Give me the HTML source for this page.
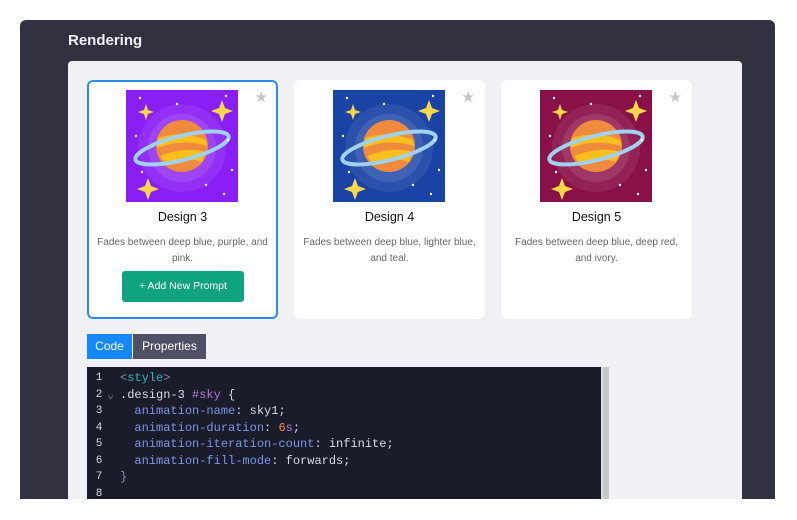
<!DOCTYPE html>
<html><head><meta charset="utf-8"><style>
*{margin:0;padding:0;box-sizing:border-box}
body{width:797px;height:520px;background:#fff;font-family:"Liberation Sans",sans-serif;position:relative;overflow:hidden}
.dark{position:absolute;left:20px;top:20px;width:755px;height:479px;background:#32313f;border-radius:6px 6px 0 0}
.title{position:absolute;left:68px;top:32px;color:#f0f0f5;font-weight:bold;font-size:15px}
.inner{position:absolute;left:68px;top:61px;width:674px;height:438px;background:#f0f0f5;border-radius:4px 4px 0 0}
.card{position:absolute;top:80px;width:191px;height:239px;background:#fff;border-radius:6px}
.card.sel{border:2px solid #2b8cf6}
.card svg.img{position:absolute;left:39px;top:10px}
.card.sel svg.img{left:37px;top:8px}
.star{position:absolute;right:10px;top:8px;color:#c4c4c8;font-size:15px}
.card.sel .star{right:8px;top:6px}
.name{position:absolute;left:0;right:0;top:130px;text-align:center;font-size:12.5px;color:#111}
.desc{position:absolute;left:6px;right:6px;top:155px;text-align:center;font-size:10px;line-height:16px;color:#666}
.card.sel .name{top:128px}.card.sel .desc{top:153px;left:4px;right:4px}
.btn{position:absolute;left:33px;top:189px;width:122px;height:31px;background:#10a37f;border-radius:3px;color:#fff;font-size:10.5px;text-align:center;line-height:31px}
.tab{position:absolute;top:334px;height:25px;line-height:25px;font-size:12px;color:#fff;text-align:center}
.code{position:absolute;left:87px;top:367px;width:514px;height:132px;background:#1b1c29;font-family:"Liberation Mono",monospace;font-size:12px}
.ln{position:absolute;left:0;width:24px;text-align:center;color:#6b6d80;font-size:11px}
.l{position:absolute;height:16.6px;line-height:16.6px;white-space:pre;color:#d8d9e6}
.sb{position:absolute;left:601px;top:367px;width:8px;height:132px;background:#c9c9cc;border-left:2px solid #ddd}
</style></head><body>
<div class="dark"></div>
<div class="title">Rendering</div>
<div class="inner"></div>
<svg width="0" height="0" style="position:absolute"><defs>
<g id="pl">
<circle cx="56" cy="58" r="44" fill="#fff" opacity=".08"/>
<circle cx="56" cy="58" r="34" fill="#fff" opacity=".1"/>
<circle cx="56" cy="56" r="26" fill="#f08a3c"/>
<path d="M32 48 Q56 40 80 50 L81 56 Q56 48 31 58Z M34 66 Q60 56 80 62 L76 72 Q58 66 40 74Z" fill="#fdbf1a"/>
<ellipse cx="56" cy="58" rx="48" ry="12" transform="rotate(-14 56 58)" fill="none" stroke="#9ed2ee" stroke-width="4"/>
<path d="M20 14 l2 6 6 2 -6 2 -2 6 -2 -6 -6 -2 6 -2z" fill="#fdd74a"/>
<path d="M96 10 l3 8 8 3 -8 3 -3 8 -3 -8 -8 -3 8 -3z" fill="#fdd74a"/>
<path d="M22 88 l3 8 8 3 -8 3 -3 8 -3 -8 -8 -3 8 -3z" fill="#fdd74a"/>
<g fill="#fff"><circle cx="14" cy="8" r="1.2"/><circle cx="51" cy="14" r="1.2"/><circle cx="100" cy="6" r="1.2"/><circle cx="10" cy="46" r="1.2"/><circle cx="102" cy="50" r="1.2"/><circle cx="16" cy="82" r="1.2"/><circle cx="80" cy="95" r="1.2"/><circle cx="106" cy="80" r="1.2"/><circle cx="98" cy="104" r="1.2"/></g>
</g></defs></svg>

<div class="card sel" style="left:87px">
<svg class="img" width="112" height="112"><rect width="112" height="112" fill="#8a1ff5"/><use href="#pl"/></svg>
<div class="star">★</div><div class="name">Design 3</div>
<div class="desc">Fades between deep blue, purple, and pink.</div>
<div class="btn">+ Add New Prompt</div></div>

<div class="card" style="left:294px">
<svg class="img" width="112" height="112"><rect width="112" height="112" fill="#1a43a6"/><use href="#pl"/></svg>
<div class="star">★</div><div class="name">Design 4</div>
<div class="desc">Fades between deep blue, lighter blue, and teal.</div></div>

<div class="card" style="left:501px">
<svg class="img" width="112" height="112"><rect width="112" height="112" fill="#8a1048"/><use href="#pl"/></svg>
<div class="star">★</div><div class="name">Design 5</div>
<div class="desc">Fades between deep blue, deep red, and ivory.</div></div>

<div class="tab" style="left:87px;width:45px;background:#1488fc">Code</div>
<div class="tab" style="left:133px;width:73px;background:#4f4f66">Properties</div>

<div class="code">
<div class="l ln" style="top:3px">1</div><div class="l" style="left:33px;top:3px"><span style="color:#8e8ea6">&lt;</span><span style="color:#28b4c8">style</span><span style="color:#8e8ea6">&gt;</span></div>
<div class="l ln" style="top:20px">2</div><div class="l" style="left:20px;top:20px;color:#6b6d80">⌄</div><div class="l" style="left:33px;top:20px">.design-3 <span style="color:#b07ad8">#sky</span> {</div>
<div class="l ln" style="top:36px">3</div><div class="l" style="left:33px;top:36px">  <span style="color:#7a96e8">animation-name</span>: sky1;</div>
<div class="l ln" style="top:53px">4</div><div class="l" style="left:33px;top:53px">  <span style="color:#7a96e8">animation-duration</span>: <span style="color:#f08a3c">6</span><span style="color:#b07ad8">s</span>;</div>
<div class="l ln" style="top:69px">5</div><div class="l" style="left:33px;top:69px">  <span style="color:#7a96e8">animation-iteration-count</span>: infinite;</div>
<div class="l ln" style="top:86px">6</div><div class="l" style="left:33px;top:86px">  <span style="color:#7a96e8">animation-fill-mode</span>: forwards;</div>
<div class="l ln" style="top:102px">7</div><div class="l" style="left:33px;top:102px;color:#8e8ea6">}</div>
<div class="l ln" style="top:119px">8</div>
</div>
<div class="sb"></div>
</body></html>
